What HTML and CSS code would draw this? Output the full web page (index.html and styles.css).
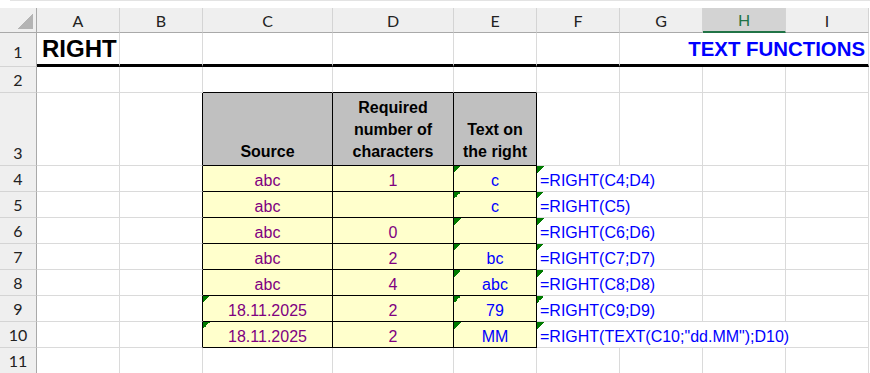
FILE: index.html
```html
<!DOCTYPE html>
<html lang="en">
<head>
    <meta charset="UTF-8">
    <title>RIGHT</title>
    <link rel="stylesheet" href="styles.css">
</head>
<body>
    <div class="topstrip"></div>
    <div class="sheet">
        <div class="corner"></div>
        <div class="colhead">A</div>
        <div class="colhead">B</div>
        <div class="colhead">C</div>
        <div class="colhead">D</div>
        <div class="colhead">E</div>
        <div class="colhead">F</div>
        <div class="colhead">G</div>
        <div class="colhead sel">H</div>
        <div class="colhead">I</div>

        <div class="rowhead first">1</div>
        <div class="cell row1 title">RIGHT</div>
        <div class="cell row1"></div>
        <div class="cell row1"></div>
        <div class="cell row1"></div>
        <div class="cell row1"></div>
        <div class="cell row1"></div>
        <div class="cell row1 span3 subtitle">TEXT FUNCTIONS</div>

        <div class="rowhead">2</div>
        <div class="cell"></div>
        <div class="cell"></div>
        <div class="cell top"></div>
        <div class="cell top"></div>
        <div class="cell top"></div>
        <div class="cell"></div>
        <div class="cell"></div>
        <div class="cell"></div>
        <div class="cell"></div>

        <div class="rowhead">3</div>
        <div class="cell"></div>
        <div class="cell left"></div>
        <div class="hd">Source</div>
        <div class="hd">Required<br>number of<br>characters</div>
        <div class="hd">Text on<br>the right</div>
        <div class="cell"></div>
        <div class="cell"></div>
        <div class="cell"></div>
        <div class="cell"></div>

        <div class="rowhead">4</div>
        <div class="cell"></div>
        <div class="cell left"></div>
        <div class="val">abc</div>
        <div class="val">1</div>
        <div class="val res flag">c</div>
        <div class="cell fx flag span2">=RIGHT(C4;D4)</div>
        <div class="cell"></div>
        <div class="cell"></div>

        <div class="rowhead">5</div>
        <div class="cell"></div>
        <div class="cell left"></div>
        <div class="val">abc</div>
        <div class="val"></div>
        <div class="val res flag">c</div>
        <div class="cell fx flag span2">=RIGHT(C5)</div>
        <div class="cell"></div>
        <div class="cell"></div>

        <div class="rowhead">6</div>
        <div class="cell"></div>
        <div class="cell left"></div>
        <div class="val">abc</div>
        <div class="val">0</div>
        <div class="val res flag"></div>
        <div class="cell fx flag span2">=RIGHT(C6;D6)</div>
        <div class="cell"></div>
        <div class="cell"></div>

        <div class="rowhead">7</div>
        <div class="cell"></div>
        <div class="cell left"></div>
        <div class="val">abc</div>
        <div class="val">2</div>
        <div class="val res flag">bc</div>
        <div class="cell fx flag span2">=RIGHT(C7;D7)</div>
        <div class="cell"></div>
        <div class="cell"></div>

        <div class="rowhead">8</div>
        <div class="cell"></div>
        <div class="cell left"></div>
        <div class="val">abc</div>
        <div class="val">4</div>
        <div class="val res flag">abc</div>
        <div class="cell fx flag span2">=RIGHT(C8;D8)</div>
        <div class="cell"></div>
        <div class="cell"></div>

        <div class="rowhead">9</div>
        <div class="cell"></div>
        <div class="cell left"></div>
        <div class="val flag">18.11.2025</div>
        <div class="val">2</div>
        <div class="val res flag">79</div>
        <div class="cell fx flag span2">=RIGHT(C9;D9)</div>
        <div class="cell"></div>
        <div class="cell"></div>

        <div class="rowhead">10</div>
        <div class="cell"></div>
        <div class="cell left"></div>
        <div class="val flag">18.11.2025</div>
        <div class="val">2</div>
        <div class="val res flag">MM</div>
        <div class="cell fx flag span4">=RIGHT(TEXT(C10;"dd.MM");D10)</div>

        <div class="rowhead">11</div>
        <div class="cell"></div>
        <div class="cell"></div>
        <div class="cell"></div>
        <div class="cell"></div>
        <div class="cell"></div>
        <div class="cell"></div>
        <div class="cell"></div>
        <div class="cell"></div>
        <div class="cell"></div>
    </div>
</body>
</html>
```

FILE: styles.css
```css
body{
    margin: 0;
    background: #fff;
    font-family: "Liberation Sans", Arial, sans-serif;
}

.topstrip{
    height: 8px;
    margin-left: 10px;
    border-top: 1px solid #e3e3e3;
    box-sizing: border-box;
}

.sheet{
    display: grid;
    grid-template-columns: 37px 83px 83px 130px 121px 83px 83px 83px 83px 83px;
    grid-template-rows: 25px 34px 26px 73px repeat(8, 26px);
}

.sheet > div{
    box-sizing: border-box;
    display: flex;
    min-width: 0;
}

/* headers */
.corner{
    background: #efefef linear-gradient(315deg, #b4b4b4 50%, transparent 50%) no-repeat right 3px bottom 3px / 16px 16px;
    border-right: 1px solid #a9a9a9;
    border-bottom: 1px solid #a9a9a9;
}

.colhead{
    background: #efefef;
    border-right: 1px solid #d4d4d4;
    border-bottom: 1px solid #a9a9a9;
    font-family: Lato, "Open Sans", sans-serif;
    font-size: 16px;
    color: #222;
    align-items: center;
    justify-content: center;
}

.colhead.sel{
    background: #d3d3d3;
    color: #217346;
    border-bottom: 2px solid #217346;
}

.rowhead{
    background: #efefef;
    border-right: 1px solid #a9a9a9;
    border-bottom: 1px solid #d4d4d4;
    font-family: Lato, "Open Sans", sans-serif;
    font-size: 16px;
    color: #222;
    justify-content: center;
    align-items: flex-end;
    padding-bottom: 3px;
}

.rowhead.first{
    padding-bottom: 5px;
}

/* cells */
.cell{
    border-right: 1px solid #dadada;
    border-bottom: 1px solid #dadada;
    font-size: 16px;
    align-items: flex-end;
    padding: 0 3px 1px;
    white-space: nowrap;
}

.row1{
    border-bottom: 3px solid #000;
}

.cell.top{
    border-bottom-color: #000;
}

.cell.left{
    border-right-color: #000;
}

.span2{ grid-column: span 2; }
.span3{ grid-column: span 3; }
.span4{ grid-column: span 4; }

.title{
    font-size: 24px;
    font-weight: bold;
    color: #000;
    padding-left: 5px;
    padding-bottom: 1px;
}

.subtitle{
    font-size: 20.4px;
    font-weight: bold;
    color: #0000ff;
    justify-content: flex-end;
    padding-bottom: 3px;
}

.hd{
    background: #c0c0c0;
    border-right: 1px solid #000;
    border-bottom: 1px solid #000;
    font-size: 16px;
    font-weight: bold;
    line-height: 22px;
    text-align: center;
    justify-content: center;
    align-items: flex-end;
    padding-bottom: 2px;
}

.val{
    background-color: #ffffcc;
    border-right: 1px solid #000;
    border-bottom: 1px solid #000;
    font-size: 16px;
    color: #800080;
    justify-content: center;
    align-items: flex-end;
    padding-bottom: 1px;
}

.res{
    color: #0000ff;
}

.fx{
    color: #0000ff;
}

.flag{
    background-image: linear-gradient(135deg, #007a00 50%, transparent 50%);
    background-size: 7px 7px;
    background-repeat: no-repeat;
}
```
